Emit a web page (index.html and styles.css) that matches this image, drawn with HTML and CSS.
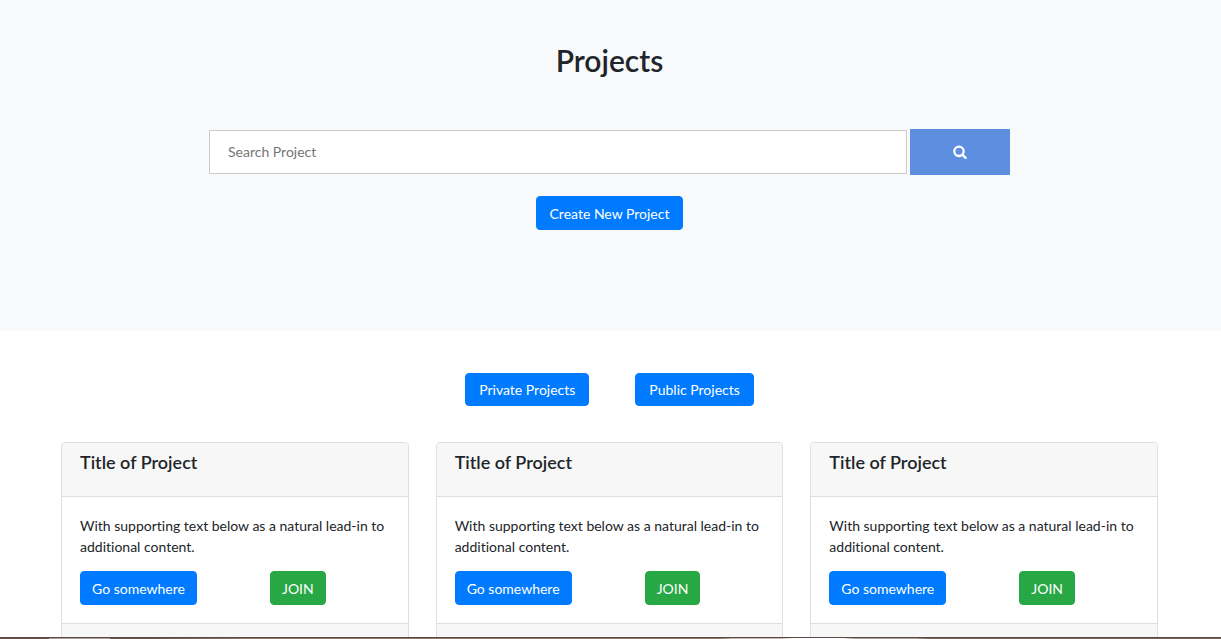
FILE: index.html
```html
<!DOCTYPE html>
<html lang="en">
<head>
<meta charset="utf-8">
<meta name="viewport" content="width=device-width, initial-scale=1">
<title>Projects</title>
<link rel="stylesheet" href="styles.css">
</head>
<body>
<section class="hero">
  <h1 class="hero-title">Projects</h1>
  <form class="search">
    <input class="search-input" type="text" placeholder="Search Project" aria-label="Search Project">
    <button class="search-button" type="button" aria-label="Search">
      <svg class="search-icon" viewBox="0 0 14 14" aria-hidden="true"><circle cx="6" cy="6.3" r="4.7" fill="none" stroke="currentColor" stroke-width="2.3"/><path d="M9.4 9.7 12.6 12.8" stroke="currentColor" stroke-width="2.4" stroke-linecap="round"/></svg>
    </button>
  </form>
  <button class="btn btn-wide" type="button">Create New Project</button>
</section>
<main class="projects">
  <nav class="filters" aria-label="Project filters">
    <button class="btn btn-wide btn-short" type="button">Private Projects</button>
    <button class="btn btn-wide btn-short" type="button">Public Projects</button>
  </nav>
  <div class="cards">
    <article class="card">
      <header class="card-header"><h2 class="card-title">Title of Project</h2></header>
      <div class="card-body">
        <p class="card-text">With supporting text below as a natural lead-in to additional content.</p>
        <div class="card-actions"><a class="btn" href="#">Go somewhere</a><a class="btn btn-join" href="#">JOIN</a></div>
      </div>
      <footer class="card-footer"></footer>
    </article>
    <article class="card">
      <header class="card-header"><h2 class="card-title">Title of Project</h2></header>
      <div class="card-body">
        <p class="card-text">With supporting text below as a natural lead-in to additional content.</p>
        <div class="card-actions"><a class="btn" href="#">Go somewhere</a><a class="btn btn-join" href="#">JOIN</a></div>
      </div>
      <footer class="card-footer"></footer>
    </article>
    <article class="card">
      <header class="card-header"><h2 class="card-title">Title of Project</h2></header>
      <div class="card-body">
        <p class="card-text">With supporting text below as a natural lead-in to additional content.</p>
        <div class="card-actions"><a class="btn" href="#">Go somewhere</a><a class="btn btn-join" href="#">JOIN</a></div>
      </div>
      <footer class="card-footer"></footer>
    </article>
  </div>
</main>
<div class="taskbar" aria-hidden="true"></div>
</body>
</html>
```
FILE: styles.css
```css
* { box-sizing: border-box; }
html { overflow: hidden; }
body {
  margin: 0;
  background: #fff;
  color: #212529;
  font: 14px/21px Lato, "Liberation Sans", sans-serif;
  font-variant-ligatures: none;
}
.hero {
  display: flex;
  flex-direction: column;
  align-items: center;
  padding: 43px 18px 101px 16px;
  background: #f8f9fb;
}
.hero-title { margin: 0 0 51px; font-size: 30px; line-height: 35px; font-weight: 600; }
.search {
  display: flex;
  align-items: center;
  gap: 3px;
  width: 100%;
  max-width: 801px;
  margin-bottom: 21px;
}
.search-input {
  flex: 1;
  min-width: 0;
  height: 44px;
  padding: 0 18px 2px;
  border: 1px solid #ccc;
  border-radius: 0;
  background: #fff;
  font: inherit;
}
.search-input::placeholder { color: #757575; }
.search-button {
  display: flex;
  align-items: center;
  justify-content: center;
  width: 100px;
  height: 46px;
  padding: 0;
  border: 0;
  background: #5d8ee0;
  color: #fff;
}
.search-icon { width: 14px; height: 14px; }
.btn {
  padding: 7px 11px 5px;
  border: 1px solid #007bff;
  border-radius: 4px;
  background: #007bff;
  color: #fff;
  font: 14px/20px Lato, "Liberation Sans", sans-serif;
  text-align: center;
  text-decoration: none;
  white-space: nowrap;
}
.btn-wide { padding-right: 13px; padding-left: 13px; }
.btn-short { padding-top: 6px; }
.btn-join { border-color: #28a745; background: #28a745; }
.projects { padding: 42px 63px 0 61px; }
.filters {
  display: flex;
  justify-content: center;
  gap: 46px;
  margin-bottom: 36px;
}
.cards {
  display: grid;
  grid-template-columns: repeat(auto-fit, minmax(300px, 1fr));
  gap: 27px;
}
.card { border: 1px solid #dfdfdf; border-radius: 4px; background: #fff; overflow: hidden; }
.card-header { padding: 9px 18px 23px; border-bottom: 1px solid #dfdfdf; background: #f7f7f7; }
.card-title { margin: 0; font-size: 18px; line-height: 21px; font-weight: 600; }
.card-body { padding: 18px; }
.card-text { margin: 0 0 14px; }
.card-actions { display: grid; grid-template-columns: 190px 1fr; justify-items: start; }
.card-footer { height: 40px; border-top: 1px solid #dfdfdf; background: #f7f7f7; }
.taskbar {
  position: fixed;
  right: 0;
  bottom: 0;
  left: 0;
  height: 2px;
  border-top: 1px solid #5b4a43;
  background: linear-gradient(90deg, #6a5145 0 4%, #aaa09a 4% 9%, #66544a 9% 12%, #8c7769 20% 59%, #c4b8b2 60% 64%, #fff 65% 69%, #a99f9a 70% 75%, #78655a 76%);
}
```
